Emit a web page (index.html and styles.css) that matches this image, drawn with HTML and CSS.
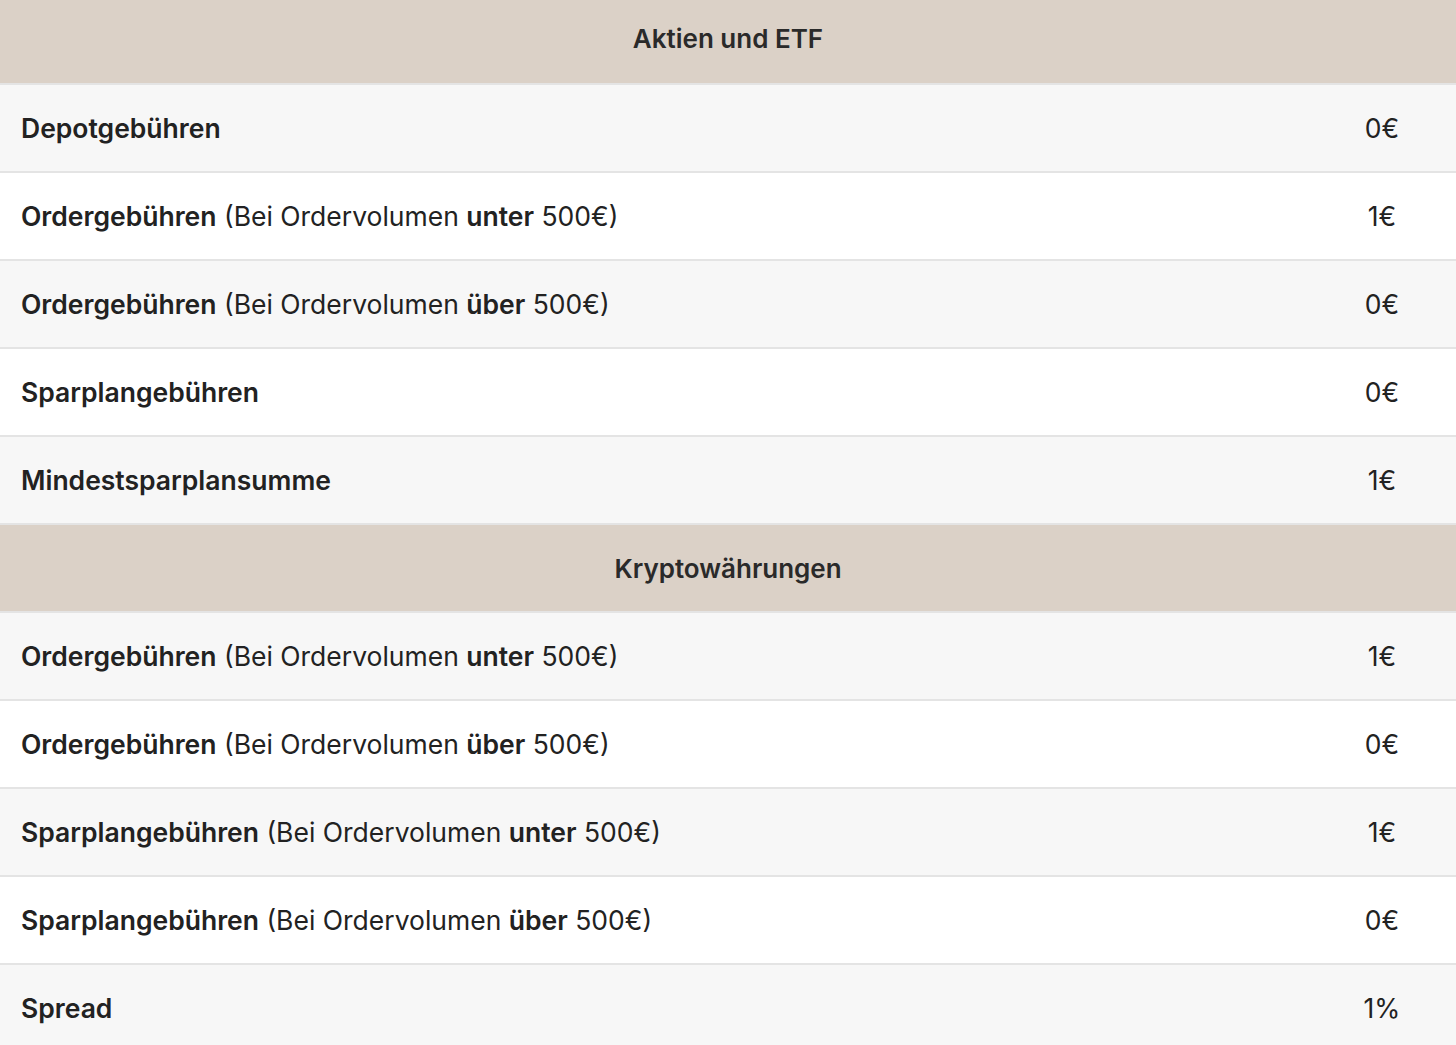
FILE: index.html
```html
<!DOCTYPE html>
<html lang="de">
<head>
<meta charset="utf-8">
<title>Gebühren</title>
<link rel="stylesheet" href="styles.css">
</head>
<body>
<table class="fees">
  <colgroup>
    <col class="col-label">
    <col class="col-value">
  </colgroup>
  <tbody>
    <tr class="section first"><th colspan="2">Aktien und ETF</th></tr>
    <tr class="odd"><td class="label"><b>Depotgebühren</b></td><td class="value">0€</td></tr>
    <tr class="even"><td class="label"><b>Ordergebühren</b> (Bei Ordervolumen <b>unter</b> 500€)</td><td class="value">1€</td></tr>
    <tr class="odd"><td class="label"><b>Ordergebühren</b> (Bei Ordervolumen <b>über</b> 500€)</td><td class="value">0€</td></tr>
    <tr class="even"><td class="label"><b>Sparplangebühren</b></td><td class="value">0€</td></tr>
    <tr class="odd"><td class="label"><b>Mindestsparplansumme</b></td><td class="value">1€</td></tr>
    <tr class="section"><th colspan="2">Kryptowährungen</th></tr>
    <tr class="odd"><td class="label"><b>Ordergebühren</b> (Bei Ordervolumen <b>unter</b> 500€)</td><td class="value">1€</td></tr>
    <tr class="even"><td class="label"><b>Ordergebühren</b> (Bei Ordervolumen <b>über</b> 500€)</td><td class="value">0€</td></tr>
    <tr class="odd"><td class="label"><b>Sparplangebühren</b> (Bei Ordervolumen <b>unter</b> 500€)</td><td class="value">1€</td></tr>
    <tr class="even"><td class="label"><b>Sparplangebühren</b> (Bei Ordervolumen <b>über</b> 500€)</td><td class="value">0€</td></tr>
    <tr class="odd"><td class="label"><b>Spread</b></td><td class="value">1%</td></tr>
  </tbody>
</table>
</body>
</html>
```
FILE: styles.css
```css
html, body {
  margin: 0;
  padding: 0;
  background: #ffffff;
}
body {
  font-family: Inter, "Noto Sans", "Liberation Sans", sans-serif;
  color: #222222;
}
.fees {
  width: 100%;
  border-collapse: collapse;
  table-layout: fixed;
}
.fees .col-value {
  width: 148px;
}
.fees tr {
  height: 88px;
  border-bottom: 2px solid #e4e4e4;
}
.fees tr.first {
  height: 84px;
}
.fees tr.first th {
  padding-bottom: 6px;
}
.fees th {
  background: #dbd1c7;
  font-size: 26px;
  font-weight: 560;
  text-align: center;
  padding: 0;
  color: #2a2a2a;
}
.fees td {
  padding: 0;
  font-size: 26.5px;
  font-weight: 400;
  vertical-align: middle;
}
.fees td b {
  font-weight: 560;
}
.fees td.label {
  padding-left: 21px;
}
.fees td.value {
  text-align: center;
}
.fees tr.odd td {
  background: #f7f7f7;
}
.fees tr.even td {
  background: #ffffff;
}
```
